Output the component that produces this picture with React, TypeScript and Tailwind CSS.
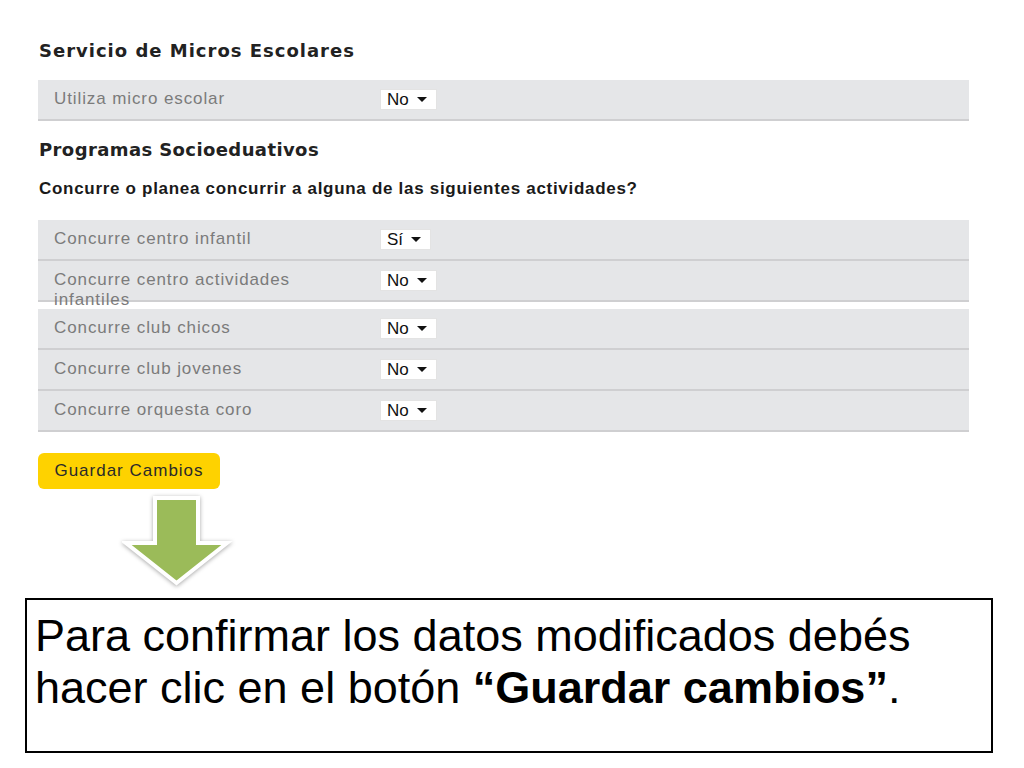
import React from "react";

const Caret = () => (
  <span className="ml-[8px] inline-block h-0 w-0 border-x-[5px] border-t-[5px] border-x-transparent border-t-[#111]" />
);

const SelectBox = ({ value }: { value: string }) => (
  <div className="flex h-[21px] items-center border border-[#e3e3e3] bg-white pl-[6px] pr-[9px] text-[17px] leading-none text-[#111]">
    <span>{value}</span>
    <Caret />
  </div>
);

const Row = ({ label, value }: { label: string; value: string }) => (
  <div className="flex h-[41px] border-b-2 border-[#cfcfd1] bg-[#e5e6e8] pl-[16px]">
    <div className="w-[326px] shrink-0 pt-[9px] pr-[80px] text-[17px] leading-[20px] tracking-[0.9px] text-[#7b7b7b]">
      {label}
    </div>
    <div className="pt-[9px]">
      <SelectBox value={value} />
    </div>
  </div>
);

const DownArrow = () => (
  <svg width="112" height="96" viewBox="0 0 112 96" className="drop-shadow-[0_1px_2px_rgba(0,0,0,0.35)]">
    <polygon
      points="33,3 76,3 76,48 105,48 54.5,88 4,48 33,48"
      fill="#9bbb59"
      stroke="#ffffff"
      strokeWidth="4"
      strokeLinejoin="miter"
    />
  </svg>
);

export default function App() {
  return (
    <div className="min-h-[768px] w-[1024px] bg-white font-['Liberation_Sans',Arial,sans-serif]">
      <div className="pl-[38px] pr-[55px] pt-[39px]">
        <h2 className="pl-[1px] font-['DejaVu_Sans',Verdana,sans-serif] text-[18px] font-bold leading-[24px] tracking-[1px] text-[#222]">
          Servicio de Micros Escolares
        </h2>
        <div className="mt-[17px]">
          <Row label="Utiliza micro escolar" value="No" />
        </div>

        <h2 className="mt-[17px] pl-[1px] font-['DejaVu_Sans',Verdana,sans-serif] text-[18px] font-bold leading-[24px] tracking-[0.4px] text-[#222]">
          Programas Socioeduativos
        </h2>
        <p className="mt-[17px] pl-[1px] text-[17px] font-bold leading-[20px] tracking-[0.7px] text-[#1a1a1a]">
          Concurre o planea concurrir a alguna de las siguientes actividades?
        </p>

        <div className="mt-[21px]">
          <Row label="Concurre centro infantil" value="Sí" />
          <Row label="Concurre centro actividades infantiles" value="No" />
        </div>
        <div className="mt-[7px]">
          <Row label="Concurre club chicos" value="No" />
          <Row label="Concurre club jovenes" value="No" />
          <Row label="Concurre orquesta coro" value="No" />
        </div>

        <button className="mt-[21px] flex h-[36px] w-[182px] items-center justify-center rounded-[6px] bg-[#fed200] text-[17px] tracking-[1px] text-[#2a2a2a]">
          Guardar Cambios
        </button>

        <div className="ml-[84px] mt-[6px]">
          <DownArrow />
        </div>
      </div>

      <div className="ml-[25px] mt-[7px] h-[155px] w-[968px] border-2 border-black pl-[8px] pt-[10px] text-[45px] leading-[52px] text-black">
        <p>Para confirmar los datos modificados debés</p>
        <p>
          hacer clic en el botón <span className="font-bold">“Guardar cambios”</span>.
        </p>
      </div>
    </div>
  );
}
